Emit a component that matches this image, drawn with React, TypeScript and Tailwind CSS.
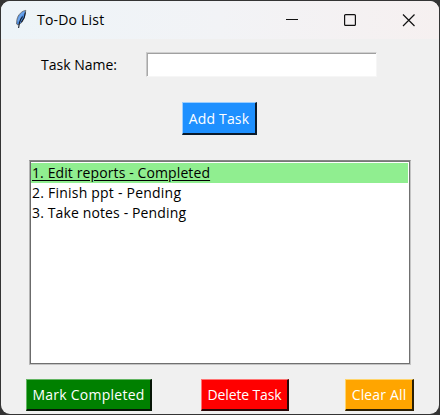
import React from 'react';

const tasks = [
  { text: '1. Edit reports - Completed', done: true, tracking: 'tracking-[0.11px]' },
  { text: '2. Finish ppt - Pending', done: false, tracking: 'tracking-[0.22px]' },
  { text: '3. Take notes - Pending', done: false, tracking: 'tracking-[0.13px]' },
];

function Feather() {
  return (
    <svg width="14" height="22" viewBox="0 0 14 22" className="shrink-0">
      <path d="M11.8 1.4C8 2 4 5.5 3 10.5L2.6 15l1.4 1 3.6-2.4 2.8-5z" fill="#4a8be0" stroke="#6b7076" strokeWidth="1" />
      <path d="M10.6 3C7 5 5.2 8 4.3 12.5" fill="none" stroke="#6fa6ec" strokeWidth="2" />
      <path d="M8.6 7.5L6.6 10.5 5.4 13.8 4.6 19M11.4 3.4L10.2 8.5 7.4 13.2" fill="none" stroke="#161d29" strokeWidth="1.1" />
    </svg>
  );
}

export default function App() {
  return (
    <div className="h-[415px] w-[440px] overflow-hidden bg-[#343434] pt-px pl-px font-['Open_Sans','Noto_Sans',sans-serif] text-[14px] text-black">
      <div className="flex h-[413px] w-[438px] flex-col overflow-hidden rounded-[9px] bg-[#f0f0f0]">
        <header className="flex h-[38px] shrink-0 items-center bg-linear-to-r from-[#edf4f8] via-[#f2f3f6] to-[#f6f0f0] pl-[13px]">
          <Feather />
          <span className="ml-[9px] w-[80px] pb-px whitespace-nowrap tracking-[0.2px]">To-Do List</span>
          <svg width="132" height="14" viewBox="0 0 132 14" className="ml-[168px]" fill="none" stroke="#111" strokeWidth="1.2">
            <path d="M1 6.5h12" />
            <rect x="59.6" y="1.6" width="10.8" height="10.8" rx="1" />
            <path d="M118 1.5l11.5 11.5M129.5 1.5L118 13" />
          </svg>
        </header>

        <div className="mt-[13px] flex h-[25px] shrink-0 items-center pl-10">
          <label htmlFor="task" className="w-[105px] whitespace-nowrap">Task Name:</label>
          <div className="h-[25px] w-[231px] border-t border-r border-b border-l border-t-[#d0d0d0] border-r-[#f6f6f6] border-b-[#f6f6f6] border-l-[#c8c8c8]">
            <input id="task" className="block h-[23px] w-full border-t border-l border-t-[#a0a0a0] border-l-[#a8a8a8] bg-white outline-none" />
          </div>
        </div>

        <button className="mt-[25px] ml-[181px] h-[33px] w-[75px] shrink-0 border-t border-r-2 border-b-2 border-l border-t-[#9bceff] border-r-[#0b1a2a] border-b-[#0b1a2a] border-l-[#9bceff] bg-[#1e90ff] whitespace-nowrap tracking-[0.15px] text-white">
          Add Task
        </button>

        <div className="mt-[25px] ml-7 h-[205px] w-[382px] shrink-0 border border-t-[#858585] border-r-[#c4c4c4] border-b-[#c4c4c4] border-l-[#b4b4b4]">
          <ul className="h-[203px] border border-t-[#777] border-r-[#707070] border-b-[#707070] border-l-[#6b6b6b] bg-white pt-px pr-px">
            {tasks.map((task) => (
              <li
                key={task.text}
                className={`h-5 pl-px leading-5 whitespace-nowrap ${task.tracking} ${task.done ? 'bg-[#90ee90] underline underline-offset-2' : ''}`}
              >
                {task.text}
              </li>
            ))}
          </ul>
        </div>

        <footer className="mt-[14px] flex h-8 shrink-0 pl-[25px] whitespace-nowrap text-white">
          <button className="w-[126px] border-t border-r-2 border-b-2 border-l border-t-[#62b562] border-r-[#061506] border-b-[#061506] border-l-[#62b562] bg-[#008000] tracking-[0.25px]">Mark Completed</button>
          <button className="ml-[49px] w-[88px] border-t border-r-2 border-b-2 border-l border-t-[#ff7373] border-r-[#2a0808] border-b-[#2a0808] border-l-[#ff7373] bg-[#ff0000] tracking-[-0.15px]">Delete Task</button>
          <button className="ml-14 w-[69px] border-t border-r-2 border-b-2 border-l border-t-[#ffd56b] border-r-[#2b1f04] border-b-[#2b1f04] border-l-[#ffd56b] bg-[#ffa500] tracking-[0.15px]">Clear All</button>
        </footer>
      </div>
    </div>
  );
}
